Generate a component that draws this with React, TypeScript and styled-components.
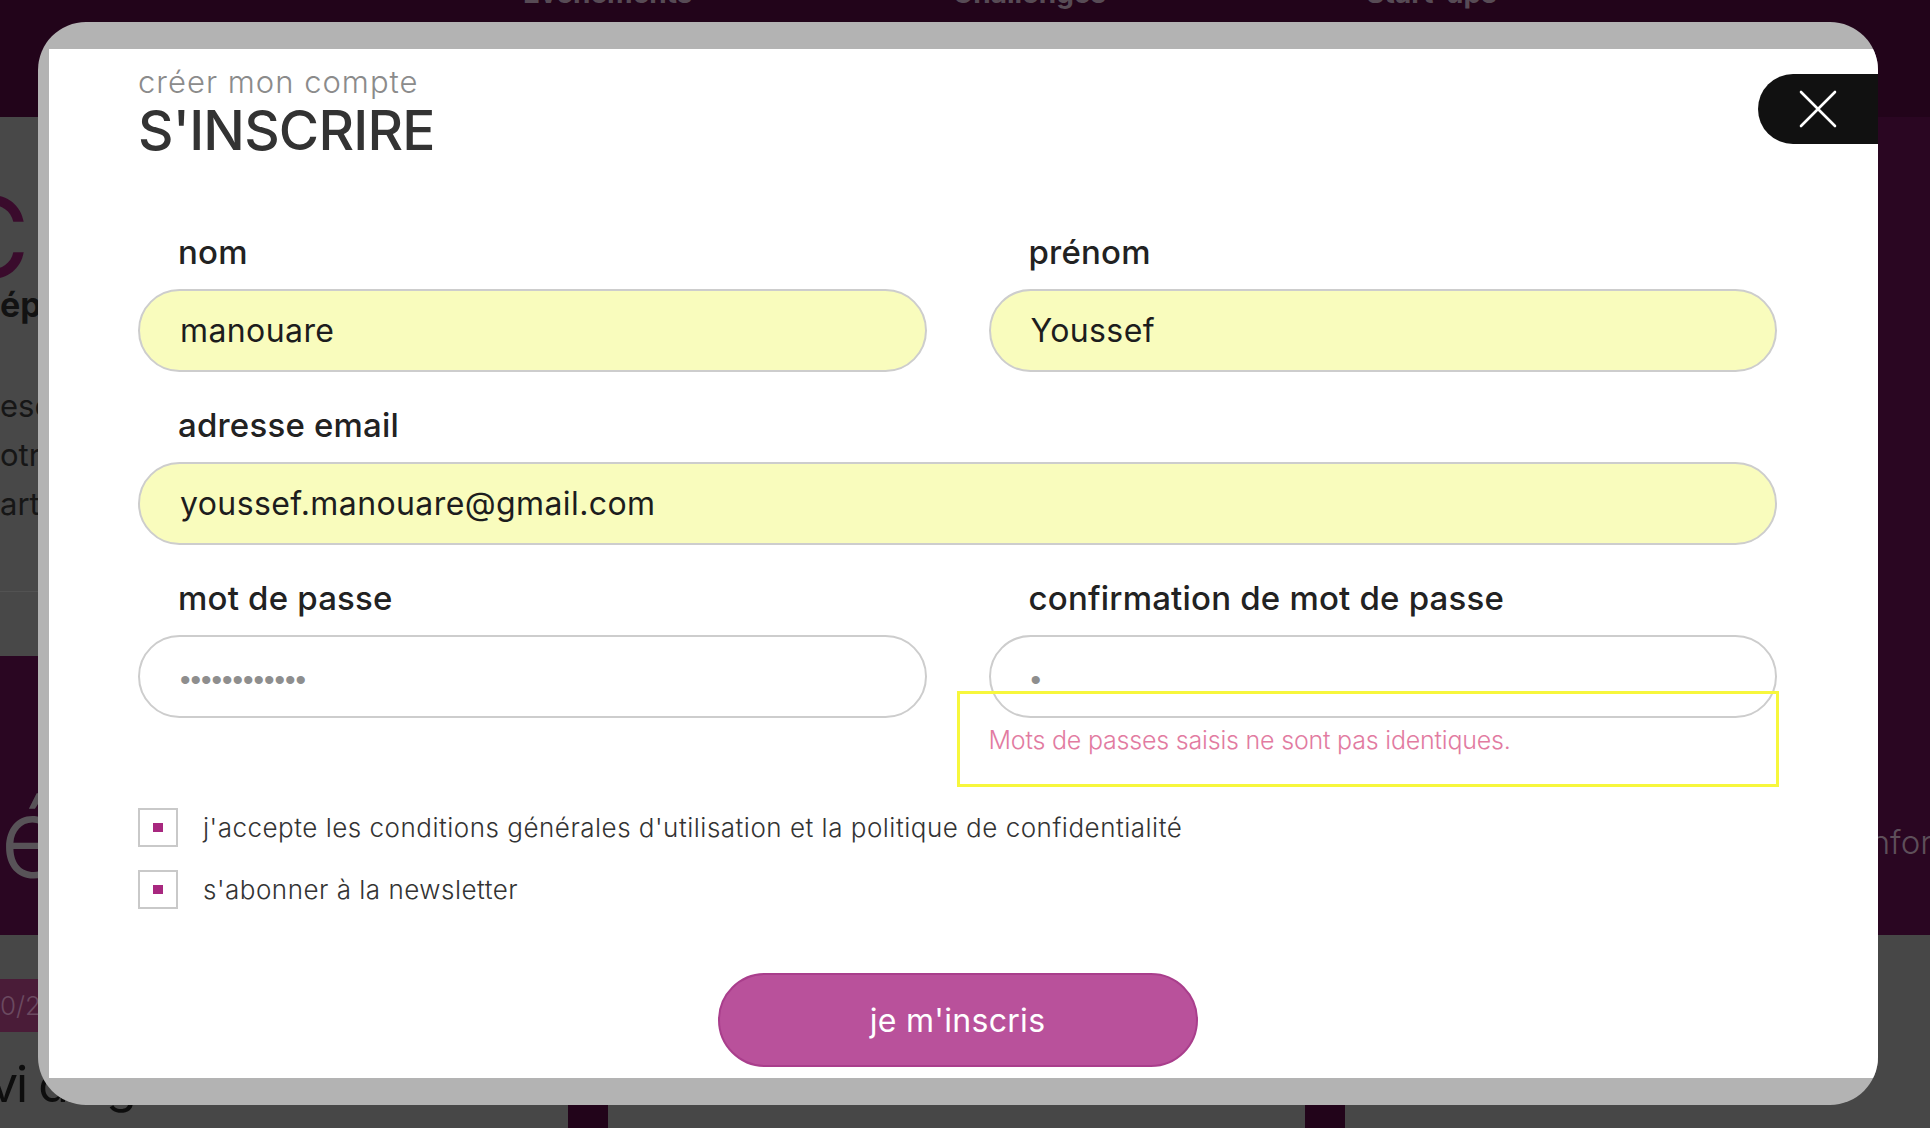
import React from 'react';
import styled, { createGlobalStyle } from 'styled-components';

const GlobalStyle = createGlobalStyle`
  html, body {
    margin: 0;
    padding: 0;
  }
  body {
    font-family: Inter, "Noto Sans", sans-serif;
    overflow: hidden;
  }
  * {
    box-sizing: border-box;
  }
`;

/* ---------- page behind the modal (dimmed) ---------- */

const Page = styled.div`
  width: 1930px;
  height: 1128px;
  overflow: hidden;
  background: #474747;
  display: flex;
  flex-direction: column;
`;

const TopNav = styled.nav`
  flex-shrink: 0;
  height: 117px;
  background: #22041a;
  display: flex;
  align-items: flex-start;
  gap: 260px;
  padding-left: 523px;
`;

const NavLink = styled.span`
  margin-top: -24px;
  font: 700 28px Inter, sans-serif;
  color: #574b55;
  white-space: nowrap;
`;

const Hero = styled.section`
  flex-shrink: 0;
  height: 539px;
  background: #2a0622;
  display: grid;
  grid-template-columns: 900px 1fr;
`;

const HeroCard = styled.div`
  background: #484848;
  display: flex;
  flex-direction: column;
  padding-top: 72px;
  overflow: hidden;
`;

const HeroLetter = styled.div`
  margin-left: -52px;
  font: 400 112px/96px Inter, sans-serif;
  color: #3a0b2c;
`;

const HeroHeading = styled.div`
  margin-top: 0;
  font: 700 34px/40px Inter, sans-serif;
  color: #121212;
  white-space: nowrap;
`;

const HeroText = styled.p`
  margin: 56px 0 0;
  font: 400 31px/49px Inter, sans-serif;
  color: #161616;
  white-space: pre-line;
`;

const HeroFooter = styled.div`
  margin-top: auto;
  height: 65px;
  border-top: 1px solid #525252;
`;

const Features = styled.section`
  flex-shrink: 0;
  height: 279px;
  background: #2a0622;
  display: flex;
  align-items: flex-start;
  justify-content: space-between;
`;

const FeatureLetter = styled.div`
  margin-top: 136px;
  font: 300 110px/90px Inter, sans-serif;
  color: #585358;
`;

const FeatureAside = styled.div`
  margin-top: 166px;
  margin-right: -40px;
  width: 108px;
  font: 300 33px/40px Inter, sans-serif;
  color: #5e4f5a;
  white-space: nowrap;
  overflow: hidden;
`;

const Cards = styled.section`
  flex: 1;
  display: grid;
  grid-template-columns: 568px 40px 697px 40px 1fr;
  background: #22041a;
`;

const Card = styled.div`
  background: #474747;
  display: flex;
  flex-direction: column;
  padding-top: 44px;
  overflow: hidden;
`;

const Gap = styled.div``;

const Counter = styled.div`
  width: 120px;
  height: 53px;
  background: #4a1c38;
  display: flex;
  align-items: center;
  font: 300 26px Inter, sans-serif;
  color: #6b4a60;
`;

const CardTitle = styled.div`
  margin: 22px 0 0 -10px;
  font: 400 50px/60px Inter, sans-serif;
  letter-spacing: -2px;
  color: #0d0d0d;
  white-space: nowrap;
`;

/* ---------- modal ---------- */

const Overlay = styled.div`
  position: fixed;
  inset: 0;
  padding: 22px 0 0 38px;
`;

const Modal = styled.div`
  width: 1840px;
  height: 1083px;
  background: #b3b3b3;
  border-radius: 48px;
  padding: 27px 0 27px 11px;
  overflow: hidden;
`;

const Sheet = styled.div`
  position: relative;
  height: 100%;
  background: #fff;
  padding: 15px 101px 0 89px;
  display: flex;
  flex-direction: column;
`;

const Eyebrow = styled.div`
  font: 300 31px/36px Inter, sans-serif;
  color: #8b8b8b;
  letter-spacing: 1px;
`;

const Title = styled.h1`
  margin: 0;
  font: 500 55px/60px Inter, sans-serif;
  color: #333;
  letter-spacing: -0.8px;
`;

const CloseButton = styled.button`
  position: absolute;
  top: 25px;
  right: 0;
  width: 120px;
  height: 70px;
  border: none;
  border-radius: 35px 0 0 35px;
  background: #111;
  display: grid;
  place-items: center;
  padding: 0;
  cursor: pointer;
`;

const Form = styled.form`
  margin-top: 72px;
  display: flex;
  flex-direction: column;
  gap: 33px;
`;

const Row = styled.div<{ $cols: number }>`
  display: grid;
  grid-template-columns: repeat(${p => p.$cols}, 1fr);
  column-gap: 62px;
  align-items: start;
`;

const Field = styled.div`
  position: relative;
  display: flex;
  flex-direction: column;
`;

const Label = styled.label`
  padding-left: 40px;
  margin-bottom: 17px;
  font: 500 33px/40px Inter, sans-serif;
  color: #222;
  letter-spacing: 0.2px;
`;

const Input = styled.input<{ $filled?: boolean; $secret?: boolean }>`
  width: 100%;
  height: 83px;
  border: 2px solid #cdcdcd;
  border-radius: 42px;
  padding: 0 40px;
  outline: none;
  background: ${p => (p.$filled ? '#f9fcbd' : '#fff')};
  font: ${p => (p.$secret ? '400 30px "Liberation Sans", sans-serif' : '400 32px Inter, sans-serif')};
  color: ${p => (p.$secret ? '#8e8e8e' : '#1d1d1d')};
  letter-spacing: ${p => (p.$secret ? '0' : '0.4px')};
  padding-top: ${p => (p.$secret ? '6px' : '0')};
`;

const ErrorText = styled.div`
  margin-top: 7px;
  font: 300 25px/30px Inter, sans-serif;
  color: #e27ba1;
  letter-spacing: -0.2px;
`;

const Highlight = styled.div`
  position: absolute;
  left: -32px;
  top: 113px;
  width: 822px;
  height: 96px;
  border: 3px solid #f7f73c;
  pointer-events: none;
`;

const Checks = styled.div`
  margin-top: 20px;
  display: flex;
  flex-direction: column;
  gap: 23px;
`;

const CheckRow = styled.label`
  display: flex;
  align-items: center;
  gap: 25px;
  font: 300 26px Inter, sans-serif;
  color: #333;
  letter-spacing: 0.5px;
`;

const Box = styled.span`
  width: 40px;
  height: 39px;
  border: 2px solid #c9c9c9;
  display: grid;
  place-items: center;
  flex-shrink: 0;
`;

const Tick = styled.span`
  width: 10px;
  height: 9px;
  background: #a8287f;
`;

const Submit = styled.button`
  align-self: center;
  margin-top: 31px;
  width: 480px;
  height: 94px;
  border: 2px solid #a93e8c;
  border-radius: 47px;
  background: #b9519b;
  color: #fff;
  font: 400 32px Inter, sans-serif;
  letter-spacing: 0.3px;
  cursor: pointer;
`;

const CloseIcon = () => (
  <svg width="38" height="38" viewBox="0 0 38 38">
    <path d="M2 2L36 36M36 2L2 36" stroke="#fff" strokeWidth="2.6" strokeLinecap="round" />
  </svg>
);

export default function App() {
  return (
    <>
      <GlobalStyle />
      <Page>
        <TopNav>
          <NavLink>Evénements</NavLink>
          <NavLink>Challenges</NavLink>
          <NavLink>Start-ups</NavLink>
        </TopNav>
        <Hero>
          <HeroCard>
            <HeroLetter>C</HeroLetter>
            <HeroHeading>ép</HeroHeading>
            <HeroText>{'esc\notre\nart'}</HeroText>
            <HeroFooter />
          </HeroCard>
          <div />
        </Hero>
        <Features>
          <FeatureLetter>é</FeatureLetter>
          <FeatureAside>Informations</FeatureAside>
        </Features>
        <Cards>
          <Card>
            <Counter>0/2</Counter>
            <CardTitle>vi de gestion</CardTitle>
          </Card>
          <Gap />
          <Card />
          <Gap />
          <Card />
        </Cards>
      </Page>

      <Overlay>
        <Modal>
          <Sheet>
            <Eyebrow>créer mon compte</Eyebrow>
            <Title>S'INSCRIRE</Title>
            <CloseButton type="button" aria-label="fermer">
              <CloseIcon />
            </CloseButton>

            <Form onSubmit={e => e.preventDefault()}>
              <Row $cols={2}>
                <Field>
                  <Label>nom</Label>
                  <Input $filled defaultValue="manouare" />
                </Field>
                <Field>
                  <Label>prénom</Label>
                  <Input $filled defaultValue="Youssef" />
                </Field>
              </Row>
              <Row $cols={1}>
                <Field>
                  <Label>adresse email</Label>
                  <Input $filled defaultValue="youssef.manouare@gmail.com" />
                </Field>
              </Row>
              <Row $cols={2}>
                <Field>
                  <Label>mot de passe</Label>
                  <Input $secret type="password" defaultValue="motdepasse12" />
                </Field>
                <Field>
                  <Label>confirmation de mot de passe</Label>
                  <Input $secret type="password" defaultValue="m" />
                  <ErrorText>Mots de passes saisis ne sont pas identiques.</ErrorText>
                  <Highlight />
                </Field>
              </Row>

              <Checks>
                <CheckRow>
                  <Box><Tick /></Box>
                  j'accepte les conditions générales d'utilisation et la politique de confidentialité
                </CheckRow>
                <CheckRow>
                  <Box><Tick /></Box>
                  s'abonner à la newsletter
                </CheckRow>
              </Checks>

              <Submit type="submit">je m'inscris</Submit>
            </Form>
          </Sheet>
        </Modal>
      </Overlay>
    </>
  );
}
